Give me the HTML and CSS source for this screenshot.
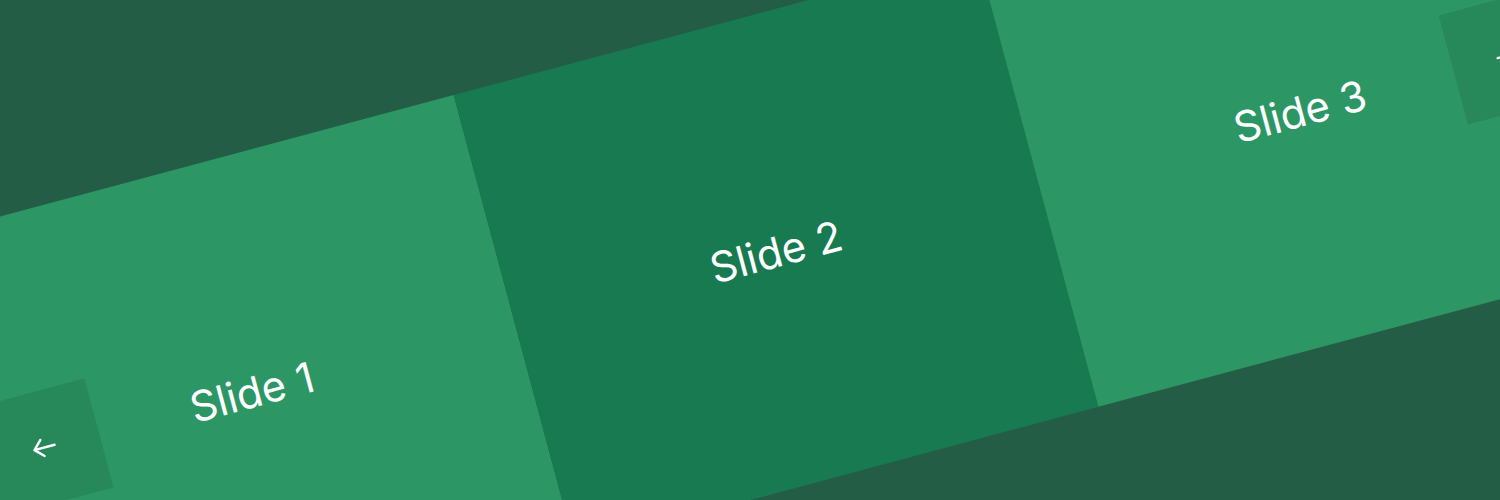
FILE: index.html
```html
<!DOCTYPE html>
<html lang="en">
<head>
<meta charset="utf-8">
<meta name="viewport" content="width=device-width, initial-scale=1">
<title>Carousel</title>
<link rel="stylesheet" href="styles.css">
</head>
<body>
<main class="stage">
  <section class="carousel" aria-label="Slides">
    <div class="slide">Slide 1</div>
    <div class="slide slide-active">Slide 2</div>
    <div class="slide">Slide 3</div>
    <button class="nav nav-prev" type="button" aria-label="Previous slide">
      <svg class="arrow" viewBox="0 0 24 24" aria-hidden="true"><path d="M22 12.500H1.200M9.500 4.200L1.200 12.500l8.300 8.300"/></svg>
    </button>
    <button class="nav nav-next" type="button" aria-label="Next slide">
      <svg class="arrow" viewBox="0 0 24 24" aria-hidden="true"><path d="M2 12.500H22.800M14.500 4.200l8.300 8.300-8.300 8.300"/></svg>
    </button>
  </section>
</main>
</body>
</html>
```

FILE: styles.css
```css
body {
  margin: 0;
  background: #245d46;
  color: #fff;
  font-family: Inter, "Liberation Sans", sans-serif;
}

.stage {
  display: flex;
  align-items: center;
  justify-content: center;
  box-sizing: border-box;
  height: 100vh;
  padding: 1px 0 0 51px;
  overflow: hidden;
}

.carousel {
  position: relative;
  display: grid;
  grid-template-columns: repeat(3, 1fr);
  flex: none;
  width: 108.5vw;
  transform: rotate(-15deg);
}

.slide {
  display: flex;
  align-items: center;
  justify-content: center;
  min-height: 468px;
  background: #2c9765;
  font-size: 42px;
}

.slide-active {
  background: #187a50;
}

.nav {
  position: absolute;
  top: 0;
  bottom: 0;
  display: flex;
  align-items: center;
  justify-content: center;
  width: 113px;
  height: 113px;
  margin: auto 0;
  padding: 0;
  border: 0;
  background: #278959;
  color: #fff;
  cursor: pointer;
}

.nav-prev {
  left: 0;
}

.nav-next {
  right: 0;
}

.arrow {
  width: 24px;
  height: 24px;
  overflow: visible;
  fill: none;
  stroke: currentColor;
  stroke-width: 2.4;
  stroke-linecap: round;
  stroke-linejoin: round;
}
```
